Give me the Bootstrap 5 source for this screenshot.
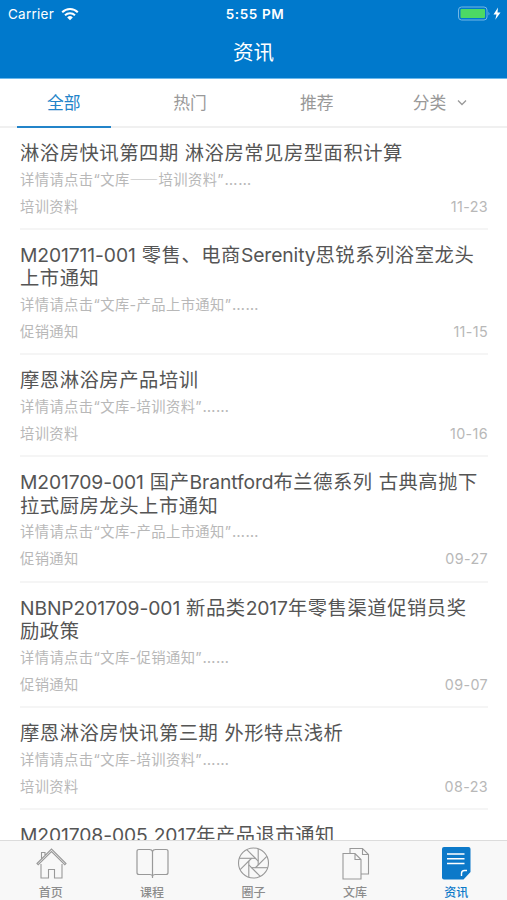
<!DOCTYPE html>
<html lang="zh-CN">
<head>
<meta charset="utf-8">
<meta name="viewport" content="width=device-width, initial-scale=1">
<title>资讯</title>
<link href="https://cdn.jsdelivr.net/npm/bootstrap@5.3.0/dist/css/bootstrap.min.css" rel="stylesheet">
<style>
  body { font-family: Inter, "Noto Sans CJK SC", sans-serif; height: 900px; overflow: hidden; background: #fff; }
  .app-head { background: #0079cc; height: 79px; border-bottom: 1px solid #6bb9ec; }
  .status { height: 27px; font-size: 13.5px; line-height: 27px; padding: 1px 5px 0 8px; }
  .status > div { flex: 1 1 0; }
  .status .carrier { gap: 7px; letter-spacing: .25px; }
  .status .clock { letter-spacing: .6px; font-size: 13.5px; }
  .page-title { font-size: 20.5px; line-height: 52px; font-weight: 400; }
  .tabs { height: 48.5px; border-bottom: 2px solid #f0f0f0; padding: 0; font-size: 16.8px; color: #999; }
  .tabs a { color: inherit; text-decoration: none; line-height: 49px; height: 48.5px; }
  .tabs a.current { color: #2384c9; }
  .tabs a.current span { display: inline-block; width: 94px; height: 48.5px; border-bottom: 2px solid #2384c9; margin-left: 1px; }
  .tabs a.menu { padding-right: 6px; }
  .feed { padding: 0 19px 0 20px; min-height: 0; overflow: hidden; }
  .entry { padding-top: 14px; height: 102.2px; border-bottom: 2px solid #f5f5f5; }
  .entry.tall { height: 125.4px; }
  .entry h2 { font-size: 19.3px; line-height: 23.3px; letter-spacing: .56px; font-weight: 400; color: #555; margin: 0; white-space: nowrap; }
  .entry h2 .lat { letter-spacing: -.1px; }
  .entry p { font-size: 14.3px; line-height: 22px; letter-spacing: .4px; color: #b8b8b8; margin: 3.5px 0 5px; white-space: nowrap; }
  .entry .cjk { font-family: "Noto Sans CJK SC", sans-serif; }
  .entry .dots { font-size: 15px; line-height: 1; margin-left: .5px; letter-spacing: .6px; }
  .meta { font-size: 14.3px; line-height: 22px; letter-spacing: .38px; color: #b8b8b8; }
  .tabbar { height: 60px; background: #f8f8f8; border-top: 1px solid #dcdcdc; color: #8c8c8c; font-size: 12px; line-height: 16px; font-weight: 500; }
  .tabbar a { color: inherit; text-decoration: none; padding-top: 4px; }
  .tabbar a.current { color: #0c79c9; }
  .tabbar svg { display: block; margin: 0 auto 3.5px; }
</style>
</head>
<body class="d-flex flex-column">
<header class="app-head text-white flex-shrink-0">
  <div class="status d-flex align-items-center">
    <div class="carrier d-flex align-items-center"><span>Carrier</span>
      <svg width="18" height="14" viewBox="0 0 18 14" fill="none" stroke="#fff" stroke-width="2"><path d="M1.2 5.2a11 11 0 0 1 15.6 0M4 8.2a7.2 7.2 0 0 1 10 0"/><path d="M6.2 10.4a4 4 0 0 1 5.6 0L9 13.2z" fill="#fff" stroke="none"/></svg>
    </div>
    <div class="clock text-center fw-semibold">5:55 PM</div>
    <div class="d-flex justify-content-end align-items-center">
      <svg width="45" height="16" viewBox="0 0 45 16"><rect x="1.5" y="1" width="28.5" height="13" rx="3" fill="none" stroke="#73b7e5"/><rect x="3.5" y="3" width="24.5" height="9" rx="1" fill="#4cd964"/><path d="M31.5 5.5q1.8 2 0 4z" fill="#73b7e5"/><path d="M41 1.5 36.5 8.500h3l-1.2 5.200L43.5 6.500h-3z" fill="#fff"/></svg>
    </div>
  </div>
  <h1 class="page-title text-center mb-0">资讯</h1>
</header>
<nav class="tabs d-flex flex-shrink-0 text-center">
  <a class="col-3 current" href="#"><span>全部</span></a>
  <a class="col-3" href="#">热门</a>
  <a class="col-3" href="#">推荐</a>
  <a class="col-3 menu d-flex justify-content-center align-items-center" href="#">分类<svg class="ms-2" width="14" height="10" viewBox="0 0 14 10" fill="none" stroke="#999" stroke-width="1.3"><path d="m4 2.500 4 4 4-4"/></svg></a>
</nav>
<main class="feed flex-grow-1">
  <article class="entry">
    <h2>淋浴房快讯第四期 淋浴房常见房型面积计算</h2>
    <p>详情请点击“文库<span class="cjk">——</span>培训资料”<span class="dots">……</span></p>
    <div class="meta d-flex justify-content-between"><span>培训资料</span><span>11-23</span></div>
  </article>
  <article class="entry tall">
    <h2><span class="lat">M201711-001</span> 零售、电商<span class="lat">Serenity</span>思锐系列浴室龙头<br>上市通知</h2>
    <p>详情请点击“文库-产品上市通知”<span class="dots">……</span></p>
    <div class="meta d-flex justify-content-between"><span>促销通知</span><span>11-15</span></div>
  </article>
  <article class="entry">
    <h2>摩恩淋浴房产品培训</h2>
    <p>详情请点击“文库-培训资料”<span class="dots">……</span></p>
    <div class="meta d-flex justify-content-between"><span>培训资料</span><span>10-16</span></div>
  </article>
  <article class="entry tall">
    <h2><span class="lat">M201709-001</span> 国产<span class="lat">Brantford</span>布兰德系列 古典高抛下<br>拉式厨房龙头上市通知</h2>
    <p>详情请点击“文库-产品上市通知”<span class="dots">……</span></p>
    <div class="meta d-flex justify-content-between"><span>促销通知</span><span>09-27</span></div>
  </article>
  <article class="entry tall">
    <h2><span class="lat">NBNP201709-001</span> 新品类<span class="lat">2017</span>年零售渠道促销员奖<br>励政策</h2>
    <p>详情请点击“文库-促销通知”<span class="dots">……</span></p>
    <div class="meta d-flex justify-content-between"><span>促销通知</span><span>09-07</span></div>
  </article>
  <article class="entry">
    <h2>摩恩淋浴房快讯第三期 外形特点浅析</h2>
    <p>详情请点击“文库-培训资料”<span class="dots">……</span></p>
    <div class="meta d-flex justify-content-between"><span>培训资料</span><span>08-23</span></div>
  </article>
  <article class="entry">
    <h2><span class="lat">M201708-005</span> <span class="lat">2017</span>年产品退市通知</h2>
  </article>
</main>
<footer class="tabbar d-flex flex-shrink-0 text-center">
  <a class="col" href="#"><svg width="36" height="36" viewBox="0 0 36 36" fill="none" stroke="#999" stroke-width="1.1"><path d="M8 19v14h7.500v-8.500h6V33H29V19M4 18.500 18.500 4 33 18.500l-1.200 1.200L18.500 6.500 5.200 19.700zM8.500 14V7.500h3.500v3"/></svg>首页</a>
  <a class="col" href="#"><svg width="36" height="36" viewBox="0 0 36 36" fill="none" stroke="#999" stroke-width="1.2"><path d="M18.500 33V6.500q-.5-2-3-2H5q-2 0-2 2v21q0 2 2 2h10.500q3 0 3 2 0-2 3-2H32q2 0 2-2v-21q0-2-2-2H21.500q-2.500 0-3 2"/></svg>课程</a>
  <a class="col" href="#"><svg width="36" height="36" viewBox="-17.5 -18 36 36" fill="none" stroke="#999" stroke-width="1.1"><circle r="15"/><path id="blade" d="M2-4.700H-14.200"/><use href="#blade" transform="rotate(45)"/><use href="#blade" transform="rotate(90)"/><use href="#blade" transform="rotate(135)"/><use href="#blade" transform="rotate(180)"/><use href="#blade" transform="rotate(225)"/><use href="#blade" transform="rotate(270)"/><use href="#blade" transform="rotate(315)"/></svg>圈子</a>
  <a class="col" href="#"><svg width="36" height="36" viewBox="0 0 36 36" fill="none" stroke="#999" stroke-width="1.1"><path d="M6 8.500h12l6 6V34H6zM18 8.500v6h6M13 8.500V3.500h12.500l6 6v19.500H24M25.500 3.500v6h6"/></svg>文库</a>
  <a class="col current" href="#"><svg width="36" height="36" viewBox="0.5 0 36 36"><path d="M6.500 2H31q2 0 2 2V27l-7 7.500h-19.500q-2 0-2-2V4q0-2 2-2z" fill="#0c79c9"/><path d="M9.500 9h17.500M9.500 13.700h17.500M9.500 18.500h17.500M24 31v-2.500q0-3 3-3h2.500" fill="none" stroke="#fff" stroke-width="1.4"/></svg>资讯</a>
</footer>
<script src="https://cdn.jsdelivr.net/npm/bootstrap@5.3.0/dist/js/bootstrap.bundle.min.js"></script>
</body>
</html>
